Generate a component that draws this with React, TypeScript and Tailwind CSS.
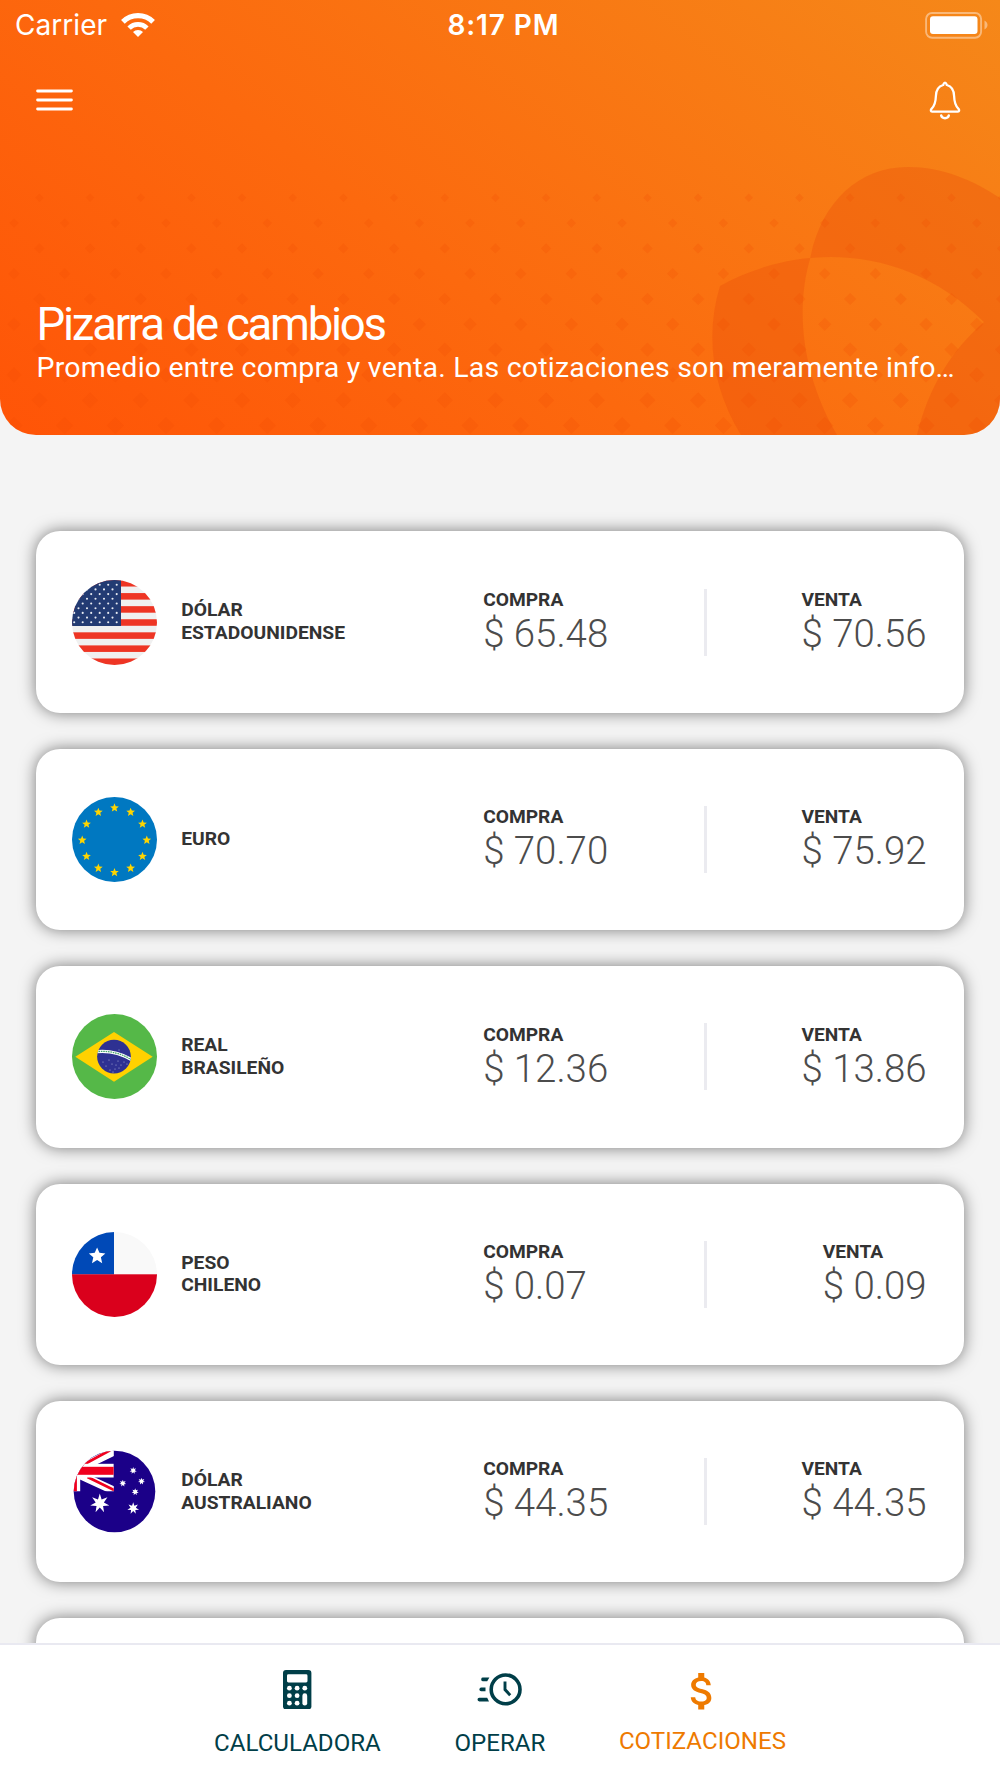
import type { ReactNode } from "react";
import { MdAttachMoney } from "react-icons/md";

interface Rate {
  id: string;
  name: string[];
  flag: ReactNode;
  buy: string;
  sell: string;
}

// Points of a regular star, first tip pointing up
function starPoints(cx: number, cy: number, outer: number, inner: number, tips = 5) {
  return Array.from({ length: tips * 2 }, (_, i) => {
    const r = i % 2 === 0 ? outer : inner;
    const a = (Math.PI * i) / tips - Math.PI / 2;
    return `${(cx + r * Math.cos(a)).toFixed(2)},${(cy + r * Math.sin(a)).toFixed(2)}`;
  }).join(" ");
}

function Flag({ id, r = 42.5, children }: { id: string; r?: number; children: ReactNode }) {
  return (
    <svg viewBox="0 0 85 85" className="w-[85px] h-[85px] shrink-0">
      <clipPath id={`flag-${id}`}>
        <circle cx="42.5" cy="42.5" r={r} />
      </clipPath>
      <g clipPath={`url(#flag-${id})`}>{children}</g>
    </svg>
  );
}

function UsaFlag() {
  const rows = Array.from({ length: 9 }, (_, i) => i);
  const cols = Array.from({ length: 6 }, (_, i) => i);
  return (
    <Flag id="usd">
      <rect width="85" height="85" fill="#f0f0f0" />
      {[0, 2, 4, 6, 8, 10, 12].map((i) => (
        <rect key={i} y={i * 6.54} width="85" height="6.54" fill="#ee3524" />
      ))}
      <rect width="49" height="46" fill="#233b73" />
      {rows.map((row) =>
        cols.map((col) => (
          <circle
            key={`${row}-${col}`}
            cx={(row % 2 ? 40.5 : 44.7) - col * 8.5}
            cy={4.7 + row * 4.7}
            r="1.05"
            fill="#e8ebf2"
          />
        ))
      )}
    </Flag>
  );
}

function EuroFlag() {
  return (
    <Flag id="eur">
      <rect width="85" height="85" fill="#0078c1" />
      {Array.from({ length: 12 }, (_, i) => {
        const a = (Math.PI * i) / 6;
        return (
          <polygon
            key={i}
            points={starPoints(42.5 + 32.3 * Math.sin(a), 43.2 - 32.3 * Math.cos(a), 4.6, 2)}
            fill="#ffd500"
          />
        );
      })}
    </Flag>
  );
}

function BrazilFlag() {
  const stars = [
    [31, 48], [34, 52], [37, 46], [40, 50], [43, 55], [46, 47], [49, 51],
    [52, 48], [47, 54], [38, 56], [44, 51], [55, 50], [41, 58], [47, 36],
  ];
  return (
    <Flag id="brl">
      <rect width="85" height="85" fill="#55b848" />
      <polygon points="3.3,42.8 42,18 80.7,42.8 42,67.7" fill="#ffd100" />
      <clipPath id="brl-globe">
        <circle cx="42" cy="42.6" r="16.9" />
      </clipPath>
      <g clipPath="url(#brl-globe)">
        <rect x="25" y="25" width="34" height="35" fill="#2e3192" />
        <path d="M24 37.7Q43 35.6 60 46" fill="none" stroke="#fff" strokeWidth="3.2" />
        <path d="M24 37.7Q43 35.6 60 46" fill="none" stroke="#45a36b" strokeWidth="1.3" strokeDasharray="1.6 0.8" />
        {stars.map(([x, y]) => (
          <circle key={`${x}-${y}`} cx={x} cy={y} r="0.5" fill="#c7c8e4" />
        ))}
      </g>
    </Flag>
  );
}

function ChileFlag() {
  return (
    <Flag id="clp">
      <rect width="85" height="85" fill="#f9f9f9" />
      <rect width="42" height="42.5" fill="#0049b7" />
      <rect y="42.3" width="85" height="43" fill="#da001c" />
      <polygon points={starPoints(25.1, 24.1, 8.7, 4)} fill="#fff" />
    </Flag>
  );
}

function AustraliaFlag() {
  return (
    <Flag id="aud" r={40.8}>
      <rect width="85" height="85" fill="#1b0088" />
      <clipPath id="aud-canton">
        <rect width="41.8" height="42.3" />
      </clipPath>
      <g clipPath="url(#aud-canton)">
        <path d="M12 17L46 0.5M8 26L46 43.5" stroke="#fff" strokeWidth="8.2" />
        <path d="M9 17L38 1.2M15.5 28L44 42" stroke="#f0001e" strokeWidth="2.7" />
        <rect y="14.8" width="41.8" height="13.7" fill="#fff" />
        <rect y="28" width="8.2" height="15" fill="#fff" />
        <rect y="17.8" width="41.8" height="8" fill="#f0001e" />
        <rect y="17.8" width="4.9" height="25" fill="#f0001e" />
      </g>
      <g fill="#fff">
        <polygon points={starPoints(27.8, 54.4, 9.8, 4.2, 7)} />
        <polygon points={starPoints(61.2, 59.3, 6, 2.7, 7)} />
        <polygon points={starPoints(61.2, 21.6, 3.6, 1.7, 7)} />
        <polygon points={starPoints(50.8, 34.3, 3.6, 1.7, 7)} />
        <polygon points={starPoints(69.5, 32.3, 3.6, 1.7, 7)} />
        <polygon points={starPoints(63.2, 42.9, 3.6, 1.7, 7)} />
      </g>
    </Flag>
  );
}

const rates: Rate[] = [
  { id: "usd", name: ["DÓLAR", "ESTADOUNIDENSE"], flag: <UsaFlag />, buy: "65.48", sell: "70.56" },
  { id: "eur", name: ["EURO"], flag: <EuroFlag />, buy: "70.70", sell: "75.92" },
  { id: "brl", name: ["REAL", "BRASILEÑO"], flag: <BrazilFlag />, buy: "12.36", sell: "13.86" },
  { id: "clp", name: ["PESO", "CHILENO"], flag: <ChileFlag />, buy: "0.07", sell: "0.09" },
  { id: "aud", name: ["DÓLAR", "AUSTRALIANO"], flag: <AustraliaFlag />, buy: "44.35", sell: "44.35" },
];

const cardClass =
  "h-[181.4px] shrink-0 rounded-[24px] bg-white shadow-[0_0_16px_rgba(0,0,0,0.5)]";

export default function App() {
  return (
    <div className="w-[1000px] h-[1778px] flex flex-col overflow-hidden bg-[#f4f4f4] font-['Roboto',sans-serif]">
      <Header />
      <main className="flex-1 min-h-0 overflow-hidden pl-[36.4px] pr-[36.2px] pt-[96.8px] flex flex-col gap-9">
        {rates.map((rate) => (
          <RateCard key={rate.id} rate={rate} />
        ))}
        <div className={cardClass} />
      </main>
      <BottomNav />
    </div>
  );
}

function Header() {
  return (
    <header className="relative h-[434.7px] shrink-0 overflow-hidden rounded-b-[36px] bg-[linear-gradient(38deg,#ff5407_0%,#fc690e_42%,#f58819_100%)] text-white">
      <HeaderPattern />
      <div className="relative h-full flex flex-col">
        {/* Status bar */}
        <div className="grid grid-cols-3 items-center h-[50px] pl-[15px] pr-3 font-['Inter',sans-serif] text-[28px] leading-[50px]">
          <div className="flex items-center gap-[14px]">
            <span className="tracking-[0.05px]">Carrier</span>
            <WifiIcon />
          </div>
          <span className="text-center font-semibold pl-[4px] tracking-[0.9px]">8:17 PM</span>
          <div className="flex justify-end">
            <BatteryIcon />
          </div>
        </div>

        {/* Toolbar */}
        <div className="flex items-center justify-between h-[100px] pl-9 pr-[39px]">
          <svg viewBox="0 0 37 22" className="w-[37px] h-[22px]" stroke="#fff" strokeWidth="2.9" strokeLinecap="round">
            <path d="M1.6 2H35.4M1.6 11H35.4M1.6 20H35.4" />
          </svg>
          <BellIcon />
        </div>

        <div className="mt-auto pl-[36.6px] pr-8 pb-[50.2px]">
          <h1 className="text-[45.5px] leading-[52px] tracking-[-2.25px] font-normal">Pizarra de cambios</h1>
          <p className="text-[28.5px] leading-[34px] tracking-[0.21px] truncate">
            Promedio entre compra y venta. Las cotizaciones son meramente info…
          </p>
        </div>
      </div>
    </header>
  );
}

function HeaderPattern() {
  const rows = Array.from({ length: 10 }, (_, i) => i);
  const cols = Array.from({ length: 21 }, (_, i) => i);
  return (
    <svg viewBox="0 0 1000 435" className="absolute inset-0 w-[1000px] h-[435px]">
      <path
        fillRule="evenodd"
        fill="#e8480a"
        fillOpacity="0.3"
        d="M837 435C802 374 795 310 810.3 258C821 203 858 167 908 167C942 167 973 180 1000 198V435Z
           M741 435C712 388 705 335 720 286C795 244 903 241 984 322C952 350 929 386 917 435Z"
      />
      <g fill="#f04c04" fillOpacity="0.22">
        {rows.map((row) =>
          cols.map((col) => {
            const cx = (row % 2 ? 14 : 39.4) + col * 50.67;
            const cy = 197.8 + row * 25.3;
            const s = 4.2 + row * 0.48;
            return <path key={`${row}-${col}`} d={`M${cx} ${cy - s}l${s} ${s}l${-s} ${s}l${-s} ${-s}z`} />;
          })
        )}
      </g>
    </svg>
  );
}

function WifiIcon() {
  return (
    <svg viewBox="0 0 34 25" className="w-[34px] h-[25px]" fill="none" stroke="#fff">
      <path d="M1.9 8.9A21.4 21.4 0 0 1 32.1 8.9" strokeWidth="5.2" />
      <path d="M8.1 15.1A12.6 12.6 0 0 1 25.9 15.1" strokeWidth="4.8" />
      <path d="M17 24L12 19A7 7 0 0 1 22 19Z" fill="#fff" stroke="none" />
    </svg>
  );
}

function BatteryIcon() {
  return (
    <svg viewBox="0 0 63 27" className="w-[63px] h-[27px]">
      <rect x="1.1" y="0.95" width="55" height="24.8" rx="6" fill="none" stroke="#fff" strokeOpacity="0.42" strokeWidth="1.9" />
      <rect x="5" y="4.3" width="47.5" height="17.8" rx="3" fill="#fff" />
      <path d="M59.5 8.5C63.5 10.5 63.5 15.5 59.5 17.5Z" fill="#fff" fillOpacity="0.42" />
    </svg>
  );
}

function BellIcon() {
  return (
    <svg
      viewBox="0 0 32 39"
      className="w-8 h-[39px]"
      fill="none"
      stroke="#fff"
      strokeWidth="2.3"
      strokeLinecap="round"
      strokeLinejoin="round"
    >
      <path d="M16 1.6C14.8 1.6 14.6 3 14.2 4C9.5 5.2 7.1 9.2 6.9 15C6.7 21.5 5.8 24.8 2.5 27.8C1.4 29.2 1.7 30.6 3.1 30.6H28.9C30.3 30.6 30.6 29.2 29.5 27.8C26.2 24.8 25.3 21.5 25.1 15C24.9 9.2 22.5 5.2 17.8 4C17.4 3 17.2 1.6 16 1.6Z" />
      <path d="M12.2 34.4C12.8 38.1 19.2 38.1 19.8 34.4" strokeWidth="2.5" />
    </svg>
  );
}

function RateCard({ rate }: { rate: Rate }) {
  return (
    <article className={`${cardClass} flex items-center pl-[35.9px] pr-[37.3px] text-[#333]`}>
      {rate.flag}
      <h2 className="w-[302px] ml-[23.9px] text-[19.25px] leading-[22.7px] font-bold">
        {rate.name.map((line) => (
          <span key={line} className="block">{line}</span>
        ))}
      </h2>
      <div className="w-[221px]">
        <Price label="COMPRA" value={rate.buy} />
      </div>
      <div className="w-[2.6px] h-[67px] bg-[#ebebf0]" />
      <div className="flex-1 flex justify-end">
        <Price label="VENTA" value={rate.sell} />
      </div>
    </article>
  );
}

function Price({ label, value }: { label: string; value: string }) {
  return (
    <div>
      <div className="text-[19.2px] leading-[24px] font-bold">{label}</div>
      <div className="text-[38.4px] leading-[44.6px] font-light text-[#4c4c4c]">$ {value}</div>
    </div>
  );
}

function BottomNav() {
  return (
    <nav className="h-[135.4px] shrink-0 flex justify-center gap-[73.6px] border-t-2 border-[#e9e9f1] bg-white pt-[18px] text-[24.1px] leading-[28px] text-[#003e48]">
      <div className="flex flex-col items-center">
        <div className="flex items-center h-[54px]">
          <CalculatorIcon />
        </div>
        <span className="mt-3">CALCULADORA</span>
      </div>
      <div className="flex flex-col items-center">
        <div className="flex items-center h-[54px]">
          <FastClockIcon />
        </div>
        <span className="mt-3">OPERAR</span>
      </div>
      <div className="flex flex-col items-center text-[#ee7a00]">
        <div className="flex items-center h-[54px] pt-1">
          <MdAttachMoney className="w-[48.5px] h-[48.5px]" />
        </div>
        <span className="mt-2.5">COTIZACIONES</span>
      </div>
    </nav>
  );
}

function CalculatorIcon() {
  const keys = [
    [6.4, 18.2], [14.1, 18.2], [21.8, 18.2],
    [6.4, 25.7], [14.1, 25.7],
    [6.4, 33.2], [14.1, 33.2],
  ];
  return (
    <svg viewBox="0 0 28.4 39.4" className="w-[28.4px] h-[39.4px]">
      <rect width="28.4" height="39.4" rx="3" fill="#003e48" />
      <rect x="4" y="4.3" width="20.5" height="8.2" rx="1.4" fill="#fff" />
      {keys.map(([x, y]) => (
        <circle key={`${x}-${y}`} cx={x} cy={y} r="2.4" fill="#fff" />
      ))}
      <rect x="19.4" y="23.3" width="4.8" height="12.3" rx="2.4" fill="#fff" />
    </svg>
  );
}

function FastClockIcon() {
  return (
    <svg viewBox="0 0 45 33" className="w-[45px] h-[33px]" fill="none" stroke="#003e48">
      <circle cx="28.6" cy="16.4" r="14.4" strokeWidth="3.6" />
      <path d="M28 8.6V16.6L33.2 22.2" strokeWidth="2.9" />
      <path d="M6.4 4.6H12.4L10.2 8.2H5.6A1.8 1.8 0 0 1 6.4 4.6Z" fill="#003e48" stroke="none" />
      <path d="M4.2 14.6H8.5V18.2H4.2A1.8 1.8 0 0 1 4.2 14.6Z" fill="#003e48" stroke="none" />
      <path d="M2.3 24.8H10.2L12 28.4H2.3A1.8 1.8 0 0 1 2.3 24.8Z" fill="#003e48" stroke="none" />
    </svg>
  );
}
